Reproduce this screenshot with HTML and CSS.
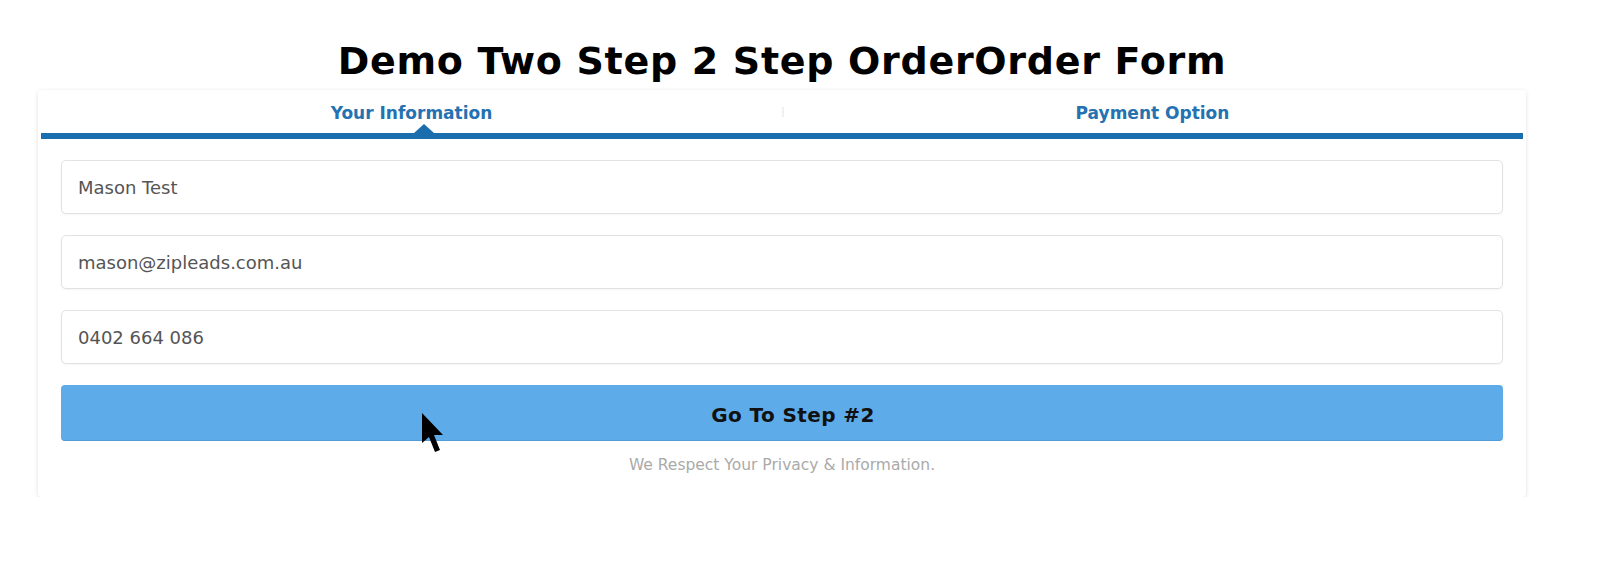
FILE: index.html
```html
<!DOCTYPE html>
<html>
<head>
<meta charset="UTF-8">
<title>Demo Two Step Order Form</title>
<link rel="stylesheet" href="styles.css">
</head>
<body>

<div class="page">
	<h1 class="title">Demo Two Step 2 Step OrderOrder Form</h1>

	<div class="card">
		<div class="tabs">
			<div class="tab active">Your Information</div>
			<div class="tab">Payment Option</div>
		</div>

		<form class="form">
			<input type="text" class="field" value="Mason Test">
			<input type="text" class="field" value="mason@zipleads.com.au">
			<input type="text" class="field" value="0402 664 086">
			<button type="button" class="btn">Go To Step #2</button>
			<p class="privacy">We Respect Your Privacy &amp; Information.</p>
		</form>
	</div>
</div>

<!-- mouse pointer caught in the screenshot -->
<svg class="cursor" width="22" height="40" viewBox="0 0 22 40">
	<polygon points="0,0 0,30 7,24 13,39 18,37 12,22 21,22" fill="#000"/>
</svg>

</body>
</html>
```

FILE: styles.css
```css
* { box-sizing: border-box; }

body
{
	margin: 0;
	background-color: #fff;
	font-family: "DejaVu Sans", Verdana, sans-serif;
}

.page
{
	width: 1488px;
	margin-left: 38px;
	padding-top: 39px;
}

.title
{
	margin: 0 0 7px;
	font-size: 38px;
	line-height: 44px;
	font-weight: 700;
	letter-spacing: 0.7px;
	text-align: center;
	color: #000;
}

.card
{
	background-color: #fff;
	border-radius: 4px;
	box-shadow: 0 1px 4px rgba(0, 0, 0, 0.13);
}

.tabs
{
	display: flex;
	margin: 0 3px;
	border-bottom: 6px solid #1b6ead;
}
.tab
{
	position: relative;
	flex: 1;
	height: 43px;
	padding-top: 3px;
	line-height: 40px;
	text-align: center;
	font-size: 17px;
	font-weight: 700;
	color: #2472b1;
}
.tab + .tab::before
{
	content: "";
	position: absolute;
	left: 0;
	top: 17px;
	height: 10px;
	border-left: 2px solid #f0f0f0;
}
.tab.active::after
{
	content: "";
	position: absolute;
	left: 50%;
	bottom: 0;
	margin-left: 2px;
	border-left: 10px solid transparent;
	border-right: 10px solid transparent;
	border-bottom: 9px solid #1b6ead;
}

.form
{
	display: flex;
	flex-direction: column;
	gap: 21px;
	padding: 21px 23px 23px;
}

.field
{
	height: 54px;
	padding: 0 16px;
	border: 1px solid #e2e2e2;
	border-radius: 5px;
	box-shadow: 0 1px 2px rgba(0, 0, 0, 0.04);
	font-family: inherit;
	font-size: 18px;
	color: #555;
	background-color: #fff;
}

.btn
{
	height: 56px;
	padding: 5px 0 0 22px;
	border: none;
	border-bottom: 1px solid #4d9bd8;
	border-radius: 4px;
	background-color: #5dabe8;
	font-family: inherit;
	font-size: 20px;
	font-weight: 700;
	letter-spacing: 0.4px;
	color: #111;
}

.privacy
{
	margin: -6px 0 0;
	font-size: 15.5px;
	line-height: 18px;
	text-align: center;
	color: #aaa;
}

.cursor
{
	position: absolute;
	left: 422px;
	top: 413px;
}
```
